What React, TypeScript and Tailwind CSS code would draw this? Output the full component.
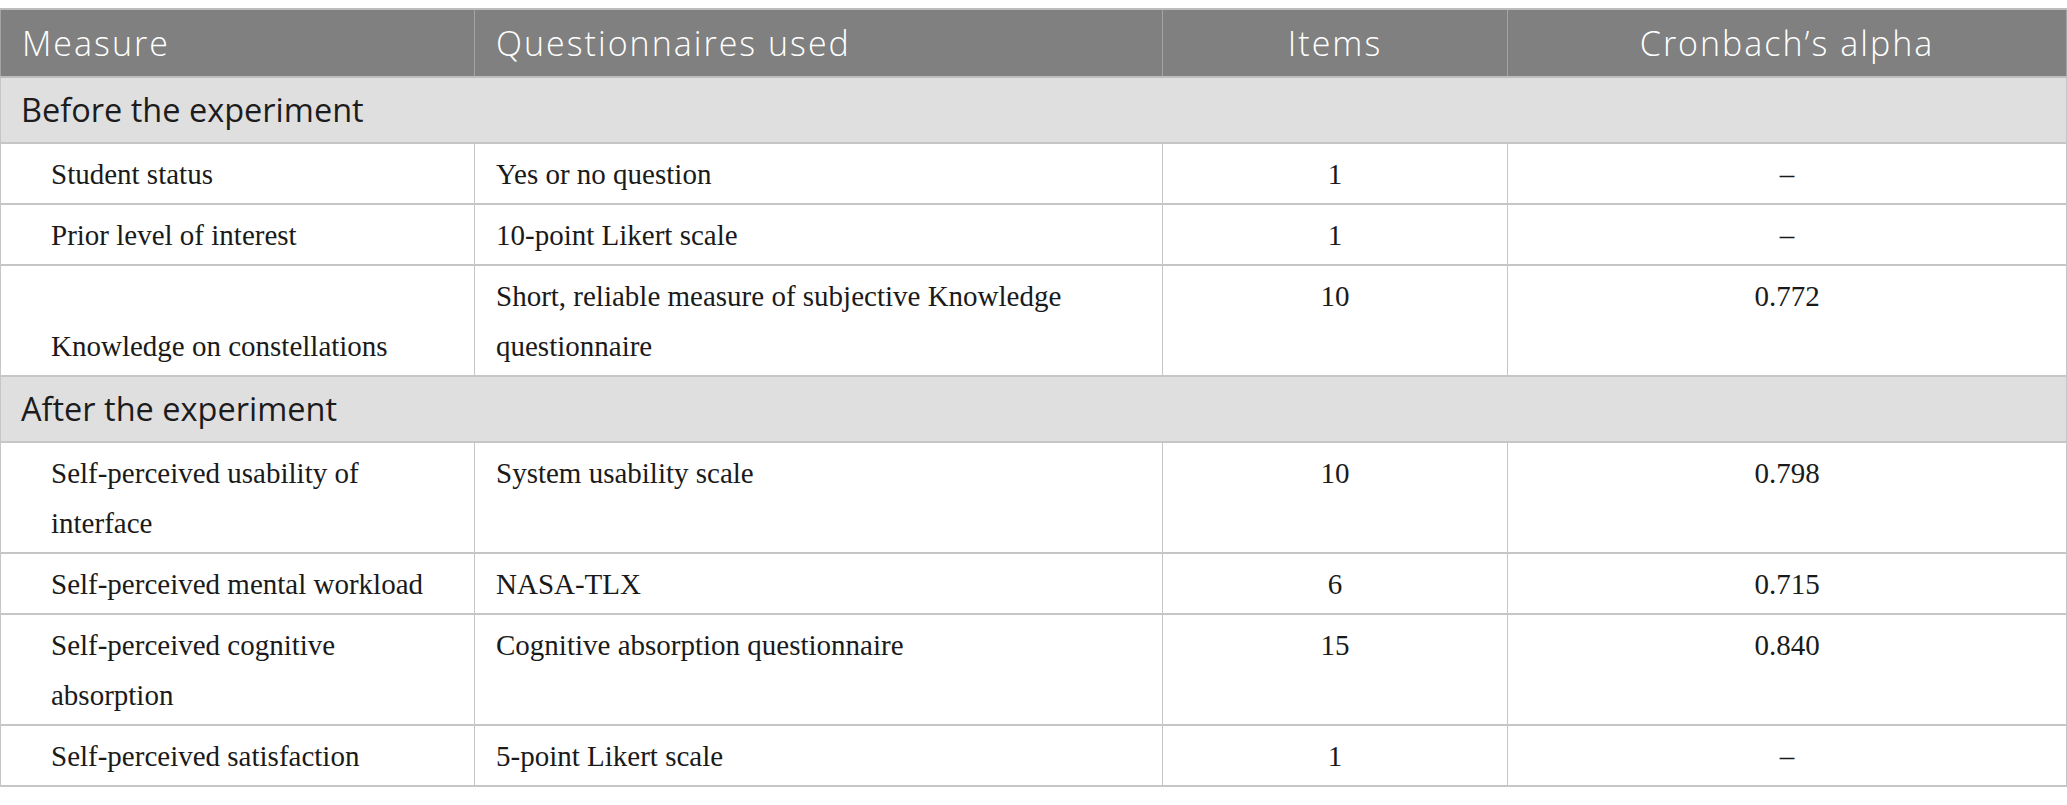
import React from 'react';

interface Row {
  measure: string;
  questionnaire: string;
  items: string;
  alpha: string;
  bottom?: boolean;
}

interface Section {
  title: string;
  rows: Row[];
}

const sections: Section[] = [
  {
    title: 'Before the experiment',
    rows: [
      { measure: 'Student status', questionnaire: 'Yes or no question', items: '1', alpha: '–' },
      { measure: 'Prior level of interest', questionnaire: '10-point Likert scale', items: '1', alpha: '–' },
      {
        measure: 'Knowledge on constellations',
        questionnaire: 'Short, reliable measure of subjective Knowledge questionnaire',
        items: '10',
        alpha: '0.772',
        bottom: true,
      },
    ],
  },
  {
    title: 'After the experiment',
    rows: [
      { measure: 'Self-perceived usability of interface', questionnaire: 'System usability scale', items: '10', alpha: '0.798' },
      { measure: 'Self-perceived mental workload', questionnaire: 'NASA-TLX', items: '6', alpha: '0.715' },
      { measure: 'Self-perceived cognitive absorption', questionnaire: 'Cognitive absorption questionnaire', items: '15', alpha: '0.840' },
      { measure: 'Self-perceived satisfaction', questionnaire: '5-point Likert scale', items: '1', alpha: '–' },
    ],
  },
];

const sans = "font-['Open_Sans','Liberation_Sans',sans-serif]";
const serif = "font-['Liberation_Serif','Times_New_Roman',serif]";
const cell = 'border-y-2 border-x border-[#c6c6c6] pt-[5px] pb-[4px] align-top';
const head = 'border-y-2 border-x border-y-[#bdbdbd] border-x-[#a2a3a2] py-[9px] font-light';

export default function App() {
  return (
    <div className="w-[2067px] bg-white pt-[8px]">
      <table className="w-[2067px] table-fixed border-collapse">
        <colgroup>
          <col className="w-[474px]" />
          <col className="w-[688px]" />
          <col className="w-[345px]" />
          <col />
        </colgroup>
        <thead>
          <tr className={`bg-[#7f807f] text-white ${sans} text-[34px] font-light leading-[48px] tracking-[2px]`}>
            <th className={`${head} pl-[21px] text-left`}>Measure</th>
            <th className={`${head} pl-[21px] text-left`}>Questionnaires used</th>
            <th className={`${head} text-center`}>Items</th>
            <th className={`${head} text-center`}>Cronbach’s alpha</th>
          </tr>
        </thead>
        <tbody>
          {sections.map((section) => (
            <React.Fragment key={section.title}>
              <tr className="bg-[#e0dfe0]">
                <td
                  colSpan={4}
                  className={`border-y-2 border-x border-[#c6c6c6] py-[8px] pl-[20px] ${sans} text-[32.5px] leading-[48px] text-[#1c1c1c]`}
                >
                  {section.title}
                </td>
              </tr>
              {section.rows.map((row) => (
                <tr key={row.measure} className={`${serif} text-[29px] leading-[50px] text-[#1a1a1a]`}>
                  <td className={`${cell} pl-[50px] pr-[22px] ${row.bottom ? '!align-bottom' : ''}`}>{row.measure}</td>
                  <td className={`${cell} pl-[21px] pr-[22px]`}>{row.questionnaire}</td>
                  <td className={`${cell} text-center`}>{row.items}</td>
                  <td className={`${cell} text-center`}>{row.alpha}</td>
                </tr>
              ))}
            </React.Fragment>
          ))}
        </tbody>
      </table>
    </div>
  );
}
